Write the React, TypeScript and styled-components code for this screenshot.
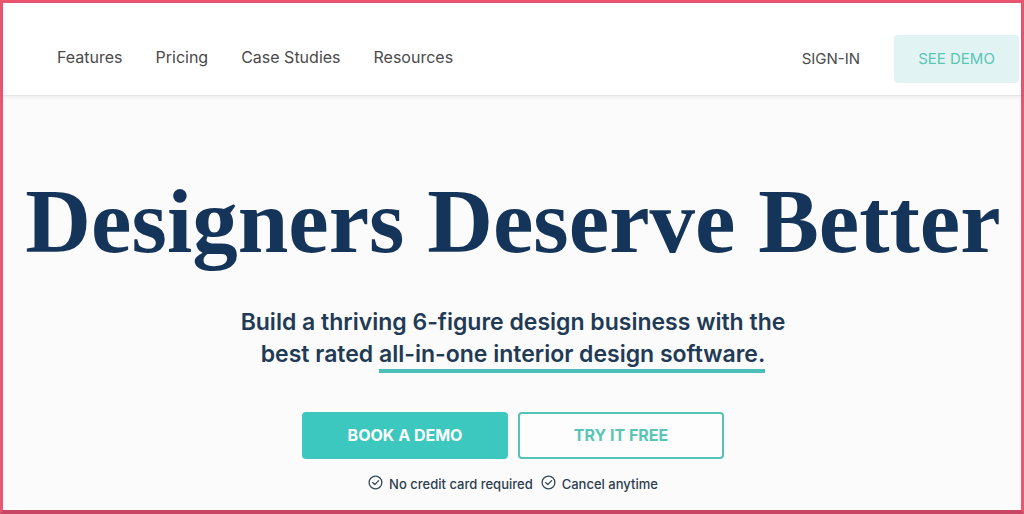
import React from 'react';
import styled, { createGlobalStyle } from 'styled-components';

const navy = '#15345a';
const teal = '#3cc8be';

const GlobalStyle = createGlobalStyle`
  *, *::before, *::after { box-sizing: border-box; }
  body { margin: 0; background: #fbfbfb; }
`;

const Frame = styled.div`
  min-height: 100vh;
  display: flex;
  flex-direction: column;
  border: 3px solid #ea5672;
  border-bottom-width: 4px;
  border-bottom-color: #c84663;
  background: #fbfbfb;
  font-family: Inter, sans-serif;
`;

const Header = styled.header`
  display: flex;
  align-items: center;
  justify-content: space-between;
  padding: 32px 2px 12px 54px;
  background: #fff;
  border-bottom: 1px solid #e6e6e6;
  box-shadow: 0 1px 4px rgba(0, 0, 0, 0.08);
`;

const Nav = styled.nav`
  display: flex;
  gap: 33px;
  padding-bottom: 4px;
`;

const NavLink = styled.a`
  color: #4a4a4a;
  font-size: 16px;
  line-height: 24px;
  text-decoration: none;
`;

const Actions = styled.div`
  display: flex;
  align-items: center;
  gap: 34px;
`;

const SignIn = styled.a`
  color: #4a4a4a;
  font-size: 15px;
  line-height: 24px;
  text-decoration: none;
`;

const Button = styled.button<{ $variant: 'soft' | 'solid' | 'outline' }>`
  height: ${(p) => (p.$variant === 'soft' ? 48 : 47)}px;
  width: ${(p) => (p.$variant === 'soft' ? 125 : 206)}px;
  padding: 0 0 1px;
  border: 2px solid
    ${(p) => (p.$variant === 'soft' ? '#e1f4f3' : p.$variant === 'solid' ? teal : '#55c3b5')};
  border-radius: 4px;
  background: ${(p) => (p.$variant === 'soft' ? '#e1f4f3' : p.$variant === 'solid' ? teal : '#fdfdfd')};
  color: ${(p) => (p.$variant === 'solid' ? '#fff' : '#5ac5b4')};
  font-family: Inter, sans-serif;
  font-size: ${(p) => (p.$variant === 'soft' ? 15 : 16)}px;
  font-weight: ${(p) => (p.$variant === 'soft' ? 400 : 700)};
  cursor: pointer;
`;

const Hero = styled.main`
  flex: 1;
  display: flex;
  flex-direction: column;
  align-items: center;
  padding: 72px 0 11px 2px;
  text-align: center;
`;

const Title = styled.h1`
  margin: 0;
  color: ${navy};
  font-family: 'Liberation Serif', serif;
  font-size: 91px;
  font-weight: 700;
  line-height: 108px;
  white-space: nowrap;
`;

const Lead = styled.p`
  max-width: 600px;
  margin: 30px 0 0;
  color: #213a55;
  font-size: 23px;
  font-weight: 600;
  line-height: 32px;
`;

const Underlined = styled.span`
  padding-bottom: 1px;
  border-bottom: 4px solid #4cbfb8;
`;

const Choices = styled.div`
  display: flex;
  gap: 10px;
  margin-top: 42px;
`;

const Perks = styled.ul`
  display: flex;
  gap: 8px;
  margin: 14px 0 0;
  padding: 0;
  list-style: none;
`;

const Perk = styled.li`
  display: flex;
  gap: 6px;
  color: #2c3e50;
  font-size: 13px;
  font-weight: 500;
  line-height: 22px;
`;

const CheckIcon = () => (
  <svg width="15" height="17" viewBox="0 -2 15 17" fill="none" stroke="#34495a" strokeWidth="1.3" aria-hidden="true">
    <circle cx="7.5" cy="7.5" r="6.4" />
    <path d="M4.6 7.6 L6.8 9.6 L10.6 5.6" strokeLinecap="round" strokeLinejoin="round" />
  </svg>
);

const links = ['Features', 'Pricing', 'Case Studies', 'Resources'];
const perks = ['No credit card required', 'Cancel anytime'];

export default function App() {
  return (
    <Frame>
      <GlobalStyle />
      <Header>
        <Nav>
          {links.map((label) => (
            <NavLink href="#" key={label}>{label}</NavLink>
          ))}
        </Nav>
        <Actions>
          <SignIn href="#">SIGN-IN</SignIn>
          <Button $variant="soft">SEE DEMO</Button>
        </Actions>
      </Header>
      <Hero>
        <Title>Designers Deserve Better</Title>
        <Lead>
          Build a thriving 6-figure design business with the
          <br />
          best rated <Underlined>all-in-one interior design software.</Underlined>
        </Lead>
        <Choices>
          <Button $variant="solid">BOOK A DEMO</Button>
          <Button $variant="outline">TRY IT FREE</Button>
        </Choices>
        <Perks>
          {perks.map((text) => (
            <Perk key={text}>
              <CheckIcon />
              {text}
            </Perk>
          ))}
        </Perks>
      </Hero>
    </Frame>
  );
}
